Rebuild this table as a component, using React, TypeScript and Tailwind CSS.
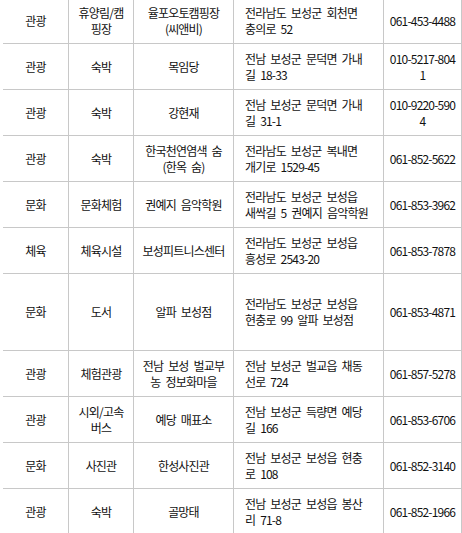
import React from "react";

type Row = { c: string[]; h?: number };

const rows: Row[] = [
  { c: ["관광", "휴양림/캠\n핑장", "율포오토캠핑장\n(씨앤비)", "전라남도 보성군 회천면\n충의로 52", "061-453-4488"] },
  { c: ["관광", "숙박", "목임당", "전남 보성군 문덕면 가내\n길 18-33", "010-5217-804\n1"] },
  { c: ["관광", "숙박", "강현재", "전남 보성군 문덕면 가내\n길 31-1", "010-9220-590\n4"] },
  { c: ["관광", "숙박", "한국천연염색 숨\n(한옥 숨)", "전라남도 보성군 복내면\n개기로 1529-45", "061-852-5622"] },
  { c: ["문화", "문화체험", "권예지 음악학원", "전라남도 보성군 보성읍\n새싹길 5 권예지 음악학원", "061-853-3962"] },
  { c: ["체육", "체육시설", "보성피트니스센터", "전라남도 보성군 보성읍\n흥성로 2543-20", "061-853-7878"] },
  { c: ["문화", "도서", "알파 보성점", "전라남도 보성군 보성읍\n현충로 99 알파 보성점", "061-853-4871"], h: 77 },
  { c: ["관광", "체험관광", "전남 보성 벌교부\n농 정보화마을", "전남 보성군 벌교읍 채동\n선로 724", "061-857-5278"] },
  { c: ["관광", "시외/고속\n버스", "예당 매표소", "전남 보성군 득량면 예당\n길 166", "061-853-6706"] },
  { c: ["문화", "사진관", "한성사진관", "전남 보성군 보성읍 현충\n로 108", "061-852-3140"] },
  { c: ["관광", "숙박", "골망태", "전남 보성군 보성읍 봉산\n리 71-8", "061-852-1966"] },
];

function Lines({ text }: { text: string }) {
  const parts = text.split("\n");
  return (
    <>
      {parts.map((p, i) => (
        <span key={i} className="block whitespace-nowrap">
          {p}
        </span>
      ))}
    </>
  );
}

export default function App() {
  return (
    <div
      className="w-[462px] h-[533px] overflow-hidden bg-white text-[#111] text-[12px] leading-[16px] tracking-[-0.8px] [word-spacing:3px]"
      style={{ fontFamily: '"Noto Sans CJK KR", "Noto Sans", sans-serif' }}
    >
      <div className="-mt-[2px] pl-[3px] flex flex-col">
        {rows.map((r, i) => (
          <div
            key={i}
            className={`flex border-b border-[#c8c8c8] ${r.h ? "h-[77px]" : "h-[46px]"}`}
          >
            <div className="w-[66px] shrink-0 border-r border-[#c8c8c8] flex flex-col items-center justify-center text-center">
              <Lines text={r.c[0]} />
            </div>
            <div className="w-[65px] shrink-0 border-r border-[#c8c8c8] flex flex-col items-center justify-center text-center">
              <Lines text={r.c[1]} />
            </div>
            <div className="w-[100px] shrink-0 border-r border-[#c8c8c8] flex flex-col items-center justify-center text-center">
              <Lines text={r.c[2]} />
            </div>
            <div className="w-[150px] shrink-0 border-r border-[#c8c8c8] flex flex-col items-start justify-center pl-[11px]">
              <Lines text={r.c[3]} />
            </div>
            <div className="w-[78px] shrink-0 border-r border-[#c8c8c8] flex flex-col items-center justify-center text-center">
              <Lines text={r.c[4]} />
            </div>
          </div>
        ))}
      </div>
    </div>
  );
}
